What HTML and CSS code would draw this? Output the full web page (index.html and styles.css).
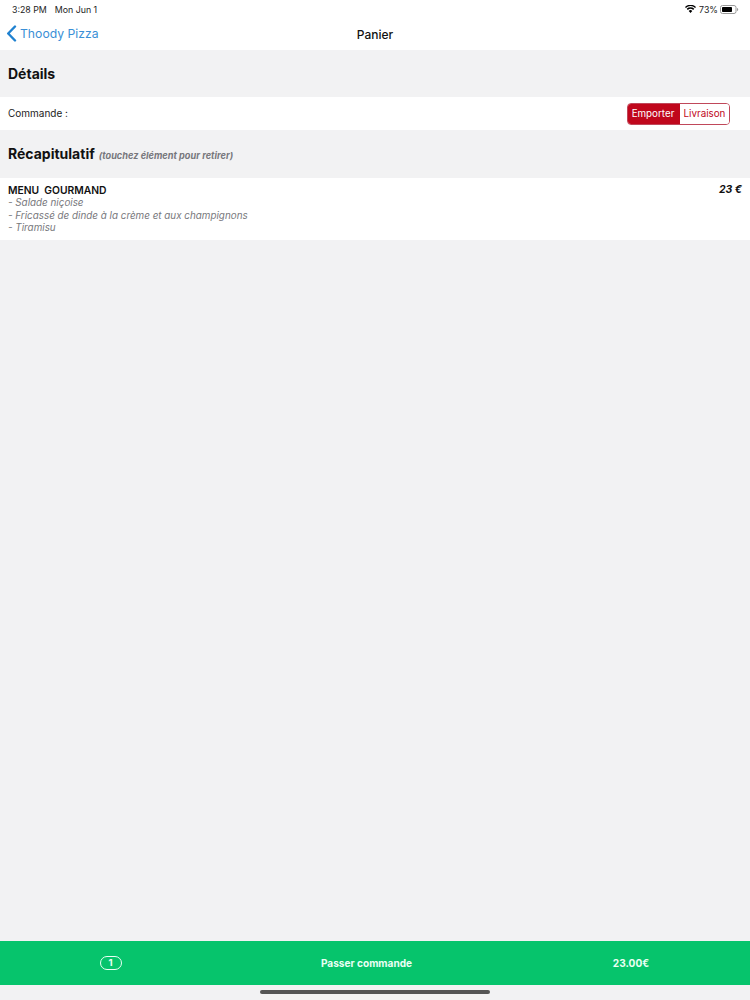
FILE: index.html
```html
<!DOCTYPE html>
<html lang="fr">
<head>
	<meta charset="UTF-8">
	<title>Panier</title>
	<link rel="stylesheet" href="styles.css">
</head>
<body>
	<div class="top">
		<div class="status">
			<div class="status-left"><span>3:28 PM</span><span>Mon Jun 1</span></div>
			<div class="status-right">
				<svg class="wifi" width="11" height="8" viewBox="0 0 11 8"><path d="M5.5 8 3.7 5.900a2.700 2.700 0 0 1 3.600 0zM2.800 5 1.700 3.800a5.600 5.600 0 0 1 7.600 0L8.200 5a4 4 0 0 0-5.400 0zM.9 2.900 0 1.900a8 8 0 0 1 11 0l-.9 1a6.700 6.700 0 0 0-9.200 0z" fill="#000"/></svg>
				<span>73%</span>
				<svg class="battery" width="19" height="9" viewBox="0 0 19 9"><rect x=".5" y=".5" width="15.500" height="8" rx="2" fill="none" stroke="#999"/><rect x="2" y="2" width="10" height="5" rx=".8" fill="#000"/><path d="M17 3v3c.7-.2 1.200-.8 1.200-1.500S17.700 3.200 17 3z" fill="#999"/></svg>
			</div>
		</div>
		<div class="nav">
			<a class="back">
				<svg width="11" height="17" viewBox="0 0 11 17"><path d="M9 1.500 2.200 8.500 9 15.500" fill="none" stroke="#1f81d0" stroke-width="2.400" stroke-linecap="round" stroke-linejoin="round"/></svg>
				<span>Thoody Pizza</span>
			</a>
			<div class="nav-title">Panier</div>
		</div>
	</div>

	<div class="section section-details"><h2>Détails</h2></div>
	<div class="row-order">
		<span>Commande :</span>
		<div class="switch">
			<span class="switch-on">Emporter</span>
			<span class="switch-off">Livraison</span>
		</div>
	</div>

	<div class="section section-recap"><h2>Récapitulatif</h2><em>(touchez élément pour retirer)</em></div>
	<div class="item">
		<div class="item-text">
			<div class="item-name">MENU&nbsp; GOURMAND</div>
			<div class="item-line">- Salade niçoise</div>
			<div class="item-line">- Fricassé de dinde à la crème et aux champignons</div>
			<div class="item-line">- Tiramisu</div>
		</div>
		<div class="item-price">23 €</div>
	</div>

	<div class="spacer"></div>

	<div class="checkout">
		<div class="checkout-col"><span class="count">1</span></div>
		<div class="checkout-col">Passer commande</div>
		<div class="checkout-col">23.00€</div>
	</div>
	<div class="home"><span class="home-bar"></span></div>
</body>
</html>
```

FILE: styles.css
```css
*{
	margin:0;
	padding:0;
	box-sizing:border-box;
}
body{
	width:750px;
	height:1000px;
	display:flex;
	flex-direction:column;
	background-color:#f2f2f3;
	font-family:Inter,"Liberation Sans",sans-serif;
	color:#111;
	overflow:hidden;
}
/* barre du haut */
.top{
	height:50px;
	background-color:#fff;
}
.status{
	height:18px;
	padding:0 11px 0 12px;
	display:flex;
	justify-content:space-between;
	align-items:center;
	font-size:8.800px;
	color:#222;
}
.status-left{
	display:flex;
	gap:8px;
}
.status-right{
	display:flex;
	align-items:center;
	gap:2px;
}
.wifi{
	margin-right:1px;
}
.nav{
	position:relative;
	height:32px;
	display:flex;
	align-items:center;
	justify-content:center;
}
.back{
	position:absolute;
	left:6px;
	top:7px;
	display:flex;
	align-items:center;
	gap:3px;
	font-size:12.200px;
	line-height:17px;
	color:#3a8fd6;
}
.nav-title{
	font-size:12px;
	font-weight:500;
}
/* sections */
.section{
	display:flex;
	align-items:center;
	padding-left:8px;
}
.section h2{
	font-size:14px;
	font-weight:700;
}
.section em{
	margin-left:4px;
	padding-top:4px;
	font-size:9.200px;
	font-weight:700;
	color:#77777c;
}
.section-details{
	height:47px;
}
.section-recap{
	height:48px;
	padding-bottom:2px;
}
.row-order{
	height:33px;
	padding:0 20px 1px 8px;
	background-color:#fff;
	display:flex;
	justify-content:space-between;
	align-items:center;
	font-size:10px;
	color:#222;
}
.switch{
	display:flex;
	height:22px;
	margin-top:1px;
	border:1px solid #c0485a;
	border-radius:4px;
	overflow:hidden;
	font-size:9.800px;
	line-height:20px;
}
.switch-on{
	width:52px;
	padding-right:2px;
	text-align:center;
	background-color:#c0071c;
	color:#fff;
}
.switch-off{
	width:49px;
	text-align:center;
	color:#c0071c;
	background-color:#fff;
}
/* contenu du panier */
.item{
	height:62px;
	padding:6px 8px 0;
	background-color:#fff;
	display:flex;
	justify-content:space-between;
	font-size:9.850px;
	line-height:12.300px;
}
.item-name{
	font-weight:600;
	font-size:10.300px;
}
.item-line{
	font-style:italic;
	color:#77777c;
}
.item-price{
	font-weight:700;
	font-style:italic;
	font-size:10.500px;
}
.spacer{
	flex:1;
}
/* barre verte */
.checkout{
	height:44px;
	background-color:#06c46c;
	display:grid;
	grid-template-columns:221px 291px 238px;
	align-items:center;
	justify-items:center;
	color:#eafff4;
	font-size:10.100px;
	font-weight:700;
}
.count{
	display:block;
	width:22px;
	height:14px;
	border:1px solid #eafff4;
	border-radius:7px;
	text-align:center;
	font-size:9.500px;
	line-height:12px;
}
.home{
	height:15px;
	display:flex;
	justify-content:center;
	padding-top:5px;
}
.home-bar{
	width:230px;
	height:4px;
	border-radius:2px;
	background-color:#555;
}
```
